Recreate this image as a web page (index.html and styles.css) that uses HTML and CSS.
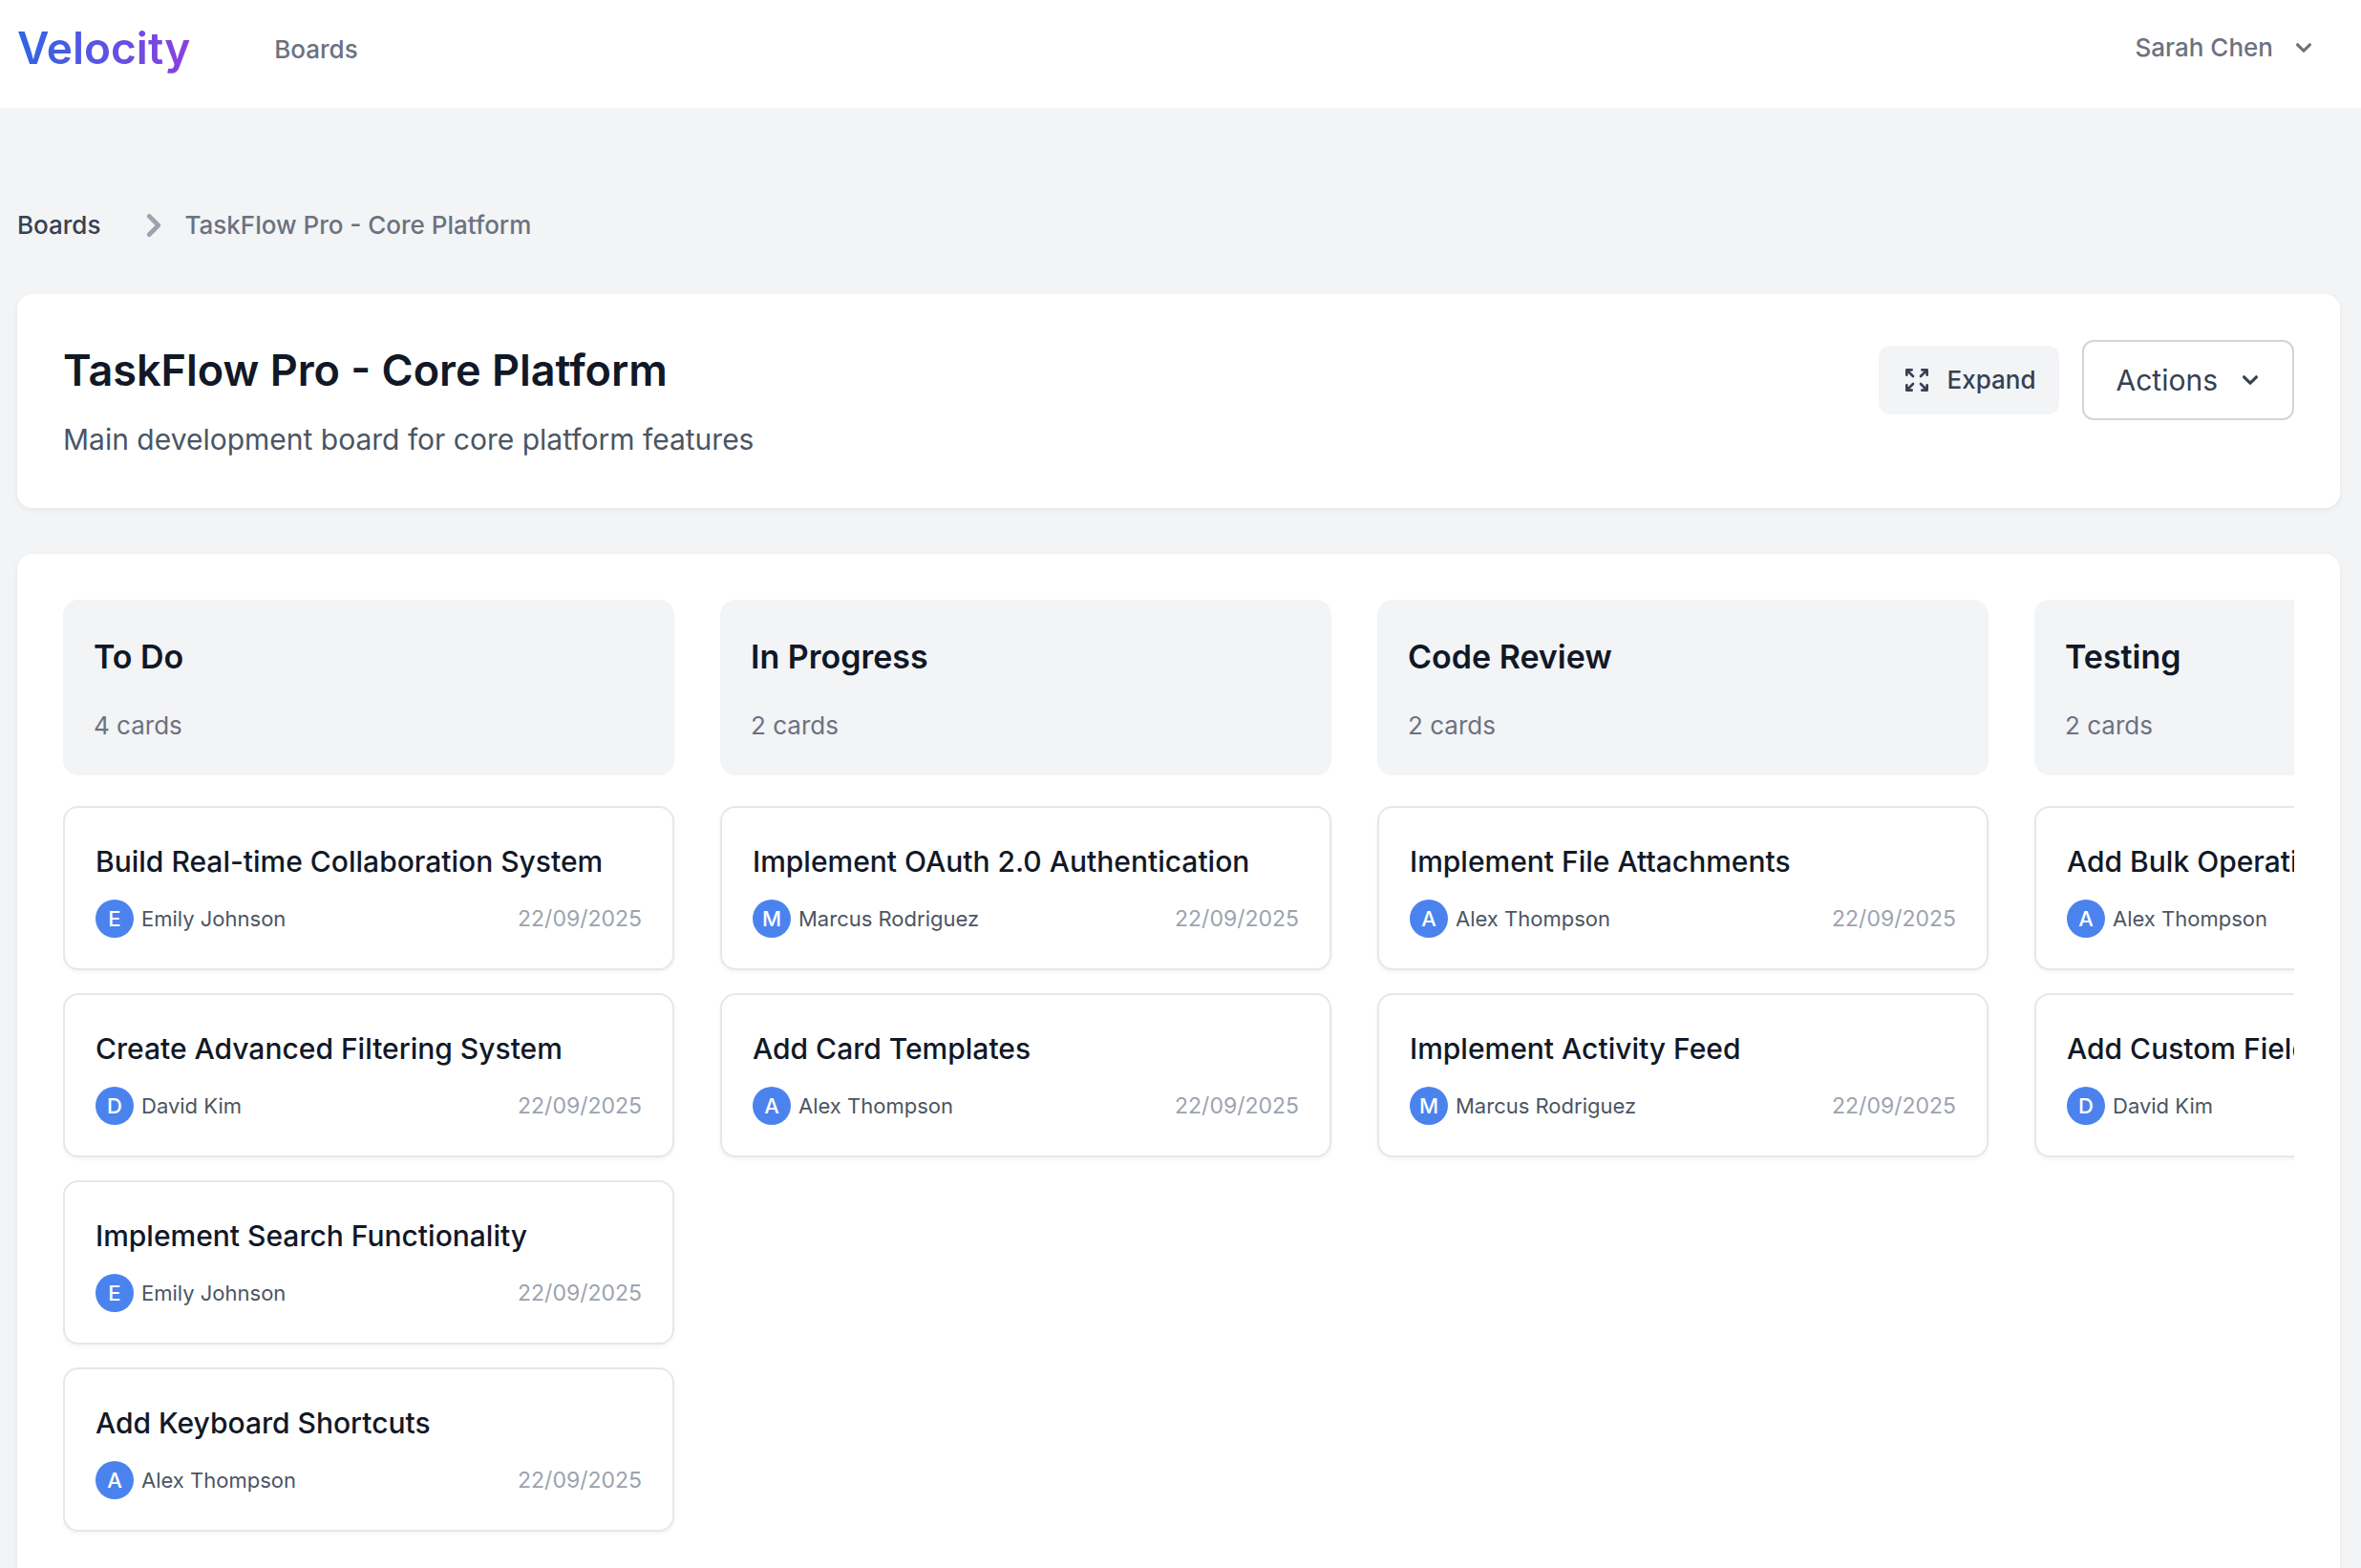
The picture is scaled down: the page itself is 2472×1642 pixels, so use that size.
FILE: index.html
```html
<!DOCTYPE html>
<html lang="en">
<head>
  <meta charset="utf-8">
  <meta name="viewport" content="width=device-width, initial-scale=1">
  <title>TaskFlow Pro - Core Platform | Velocity</title>
  <link rel="stylesheet" href="styles.css">
</head>
<body>
  <header class="topbar">
    <a class="brand" href="#">Velocity</a>
    <nav class="topnav">
      <a class="topnav-link" href="#">Boards</a>
    </nav>
    <button class="user-menu" type="button">
      Sarah Chen
      <svg class="icon" viewBox="0 0 20 20" fill="currentColor" aria-hidden="true"><path fill-rule="evenodd" d="M5.293 7.293a1 1 0 011.414 0L10 10.586l3.293-3.293a1 1 0 111.414 1.414l-4 4a1 1 0 01-1.414 0l-4-4a1 1 0 010-1.414z"/></svg>
    </button>
  </header>

  <main class="page">
    <nav class="breadcrumb" aria-label="Breadcrumb">
      <a class="breadcrumb-link" href="#">Boards</a>
      <svg class="breadcrumb-icon" viewBox="0 0 20 20" fill="currentColor" aria-hidden="true"><path fill-rule="evenodd" d="M7.293 14.707a1 1 0 010-1.414L10.586 10 7.293 6.707a1 1 0 011.414-1.414l4 4a1 1 0 010 1.414l-4 4a1 1 0 01-1.414 0z"/></svg>
      <span class="breadcrumb-current">TaskFlow Pro - Core Platform</span>
    </nav>

    <section class="panel board-header">
      <div class="board-intro">
        <h1 class="board-title">TaskFlow Pro - Core Platform</h1>
        <p class="board-description">Main development board for core platform features</p>
      </div>
      <div class="board-actions">
        <button class="button button-soft" type="button">
          <svg class="icon" viewBox="0 0 24 24" fill="none" stroke="currentColor" stroke-width="2" stroke-linecap="round" stroke-linejoin="round" aria-hidden="true"><path d="M4 8V4m0 0h4M4 4l5 5m11-1V4m0 0h-4m4 0l-5 5M4 16v4m0 0h4m-4 0l5-5m11 5l-5-5m5 5v-4m0 4h-4"/></svg>
          Expand
        </button>
        <button class="button button-outline" type="button">
          Actions
          <svg class="icon" viewBox="0 0 20 20" fill="currentColor" aria-hidden="true"><path fill-rule="evenodd" d="M5.293 7.293a1 1 0 011.414 0L10 10.586l3.293-3.293a1 1 0 111.414 1.414l-4 4a1 1 0 01-1.414 0l-4-4a1 1 0 010-1.414z"/></svg>
        </button>
      </div>
    </section>

    <section class="panel board">
      <div class="columns">
        <section class="column">
          <header class="column-header">
            <h2 class="column-title">To Do</h2>
            <p class="column-count">4 cards</p>
          </header>
          <article class="card">
            <h3 class="card-title">Build Real-time Collaboration System</h3>
            <div class="card-meta"><span class="avatar">E</span><span class="assignee">Emily Johnson</span><time class="date" datetime="2025-09-22">22/09/2025</time></div>
          </article>
          <article class="card">
            <h3 class="card-title">Create Advanced Filtering System</h3>
            <div class="card-meta"><span class="avatar">D</span><span class="assignee">David Kim</span><time class="date" datetime="2025-09-22">22/09/2025</time></div>
          </article>
          <article class="card">
            <h3 class="card-title">Implement Search Functionality</h3>
            <div class="card-meta"><span class="avatar">E</span><span class="assignee">Emily Johnson</span><time class="date" datetime="2025-09-22">22/09/2025</time></div>
          </article>
          <article class="card">
            <h3 class="card-title">Add Keyboard Shortcuts</h3>
            <div class="card-meta"><span class="avatar">A</span><span class="assignee">Alex Thompson</span><time class="date" datetime="2025-09-22">22/09/2025</time></div>
          </article>
        </section>

        <section class="column">
          <header class="column-header">
            <h2 class="column-title">In Progress</h2>
            <p class="column-count">2 cards</p>
          </header>
          <article class="card">
            <h3 class="card-title">Implement OAuth 2.0 Authentication</h3>
            <div class="card-meta"><span class="avatar">M</span><span class="assignee">Marcus Rodriguez</span><time class="date" datetime="2025-09-22">22/09/2025</time></div>
          </article>
          <article class="card">
            <h3 class="card-title">Add Card Templates</h3>
            <div class="card-meta"><span class="avatar">A</span><span class="assignee">Alex Thompson</span><time class="date" datetime="2025-09-22">22/09/2025</time></div>
          </article>
        </section>

        <section class="column">
          <header class="column-header">
            <h2 class="column-title">Code Review</h2>
            <p class="column-count">2 cards</p>
          </header>
          <article class="card">
            <h3 class="card-title">Implement File Attachments</h3>
            <div class="card-meta"><span class="avatar">A</span><span class="assignee">Alex Thompson</span><time class="date" datetime="2025-09-22">22/09/2025</time></div>
          </article>
          <article class="card">
            <h3 class="card-title">Implement Activity Feed</h3>
            <div class="card-meta"><span class="avatar">M</span><span class="assignee">Marcus Rodriguez</span><time class="date" datetime="2025-09-22">22/09/2025</time></div>
          </article>
        </section>

        <section class="column">
          <header class="column-header">
            <h2 class="column-title">Testing</h2>
            <p class="column-count">2 cards</p>
          </header>
          <article class="card">
            <h3 class="card-title">Add Bulk Operations</h3>
            <div class="card-meta"><span class="avatar">A</span><span class="assignee">Alex Thompson</span><time class="date" datetime="2025-09-22">22/09/2025</time></div>
          </article>
          <article class="card">
            <h3 class="card-title">Add Custom Fields</h3>
            <div class="card-meta"><span class="avatar">D</span><span class="assignee">David Kim</span><time class="date" datetime="2025-09-22">22/09/2025</time></div>
          </article>
        </section>
      </div>
    </section>
  </main>
</body>
</html>
```
FILE: styles.css
```css
* {
  box-sizing: border-box;
}

body {
  margin: 0;
  min-height: 100vh;
  display: flex;
  flex-direction: column;
  background: #f3f4f6;
  color: #111827;
  font: 400 30px/48px Inter, "Liberation Sans", sans-serif;
}

h1, h2, h3, p {
  margin: 0;
}

a {
  color: inherit;
  text-decoration: none;
}

button {
  margin: 0;
  border: 0;
  background: none;
  font: inherit;
  cursor: pointer;
}

.icon {
  flex: none;
  width: 32px;
  height: 32px;
}

/* Top bar */
.topbar {
  display: flex;
  align-items: center;
  padding: 10px 44px 23px 18px;
  background: #fff;
  border-bottom: 1px solid #f3f4f6;
}

.brand {
  font-size: 46px;
  font-weight: 600;
  line-height: 80px;
  background: linear-gradient(to right, #2f66e4, #8b40df);
  background-clip: text;
  -webkit-background-clip: text;
  color: transparent;
}

.topnav {
  flex: 1;
  padding-left: 88px;
}

.topnav-link,
.user-menu {
  color: #6b7280;
  font-size: 26px;
  font-weight: 500;
  line-height: 40px;
}

.user-menu {
  display: flex;
  align-items: center;
  gap: 16px;
  padding: 0;
}

/* Page */
.page {
  flex: 1;
  display: flex;
  flex-direction: column;
  padding: 92px 22px 0 18px;
}

.breadcrumb {
  display: flex;
  align-items: center;
  margin-bottom: 42px;
  color: #6b7280;
  font-size: 26px;
  font-weight: 500;
  line-height: 60px;
}

.breadcrumb-link {
  color: #374151;
}

.breadcrumb-icon {
  width: 48px;
  height: 48px;
  margin: 0 8px 0 32px;
  color: #9ca3af;
}

.panel {
  padding: 48px;
  border-radius: 16px;
  background: #fff;
  box-shadow: 0 2px 6px rgba(0, 0, 0, 0.06);
}

.board-header {
  display: flex;
  justify-content: space-between;
  align-items: flex-start;
  margin-bottom: 48px;
}

.board-title {
  margin-bottom: 16px;
  font-size: 45px;
  font-weight: 600;
  line-height: 64px;
}

.board-description {
  color: #4b5563;
}

.board-actions {
  display: flex;
  align-items: center;
  gap: 24px;
}

.button {
  display: flex;
  align-items: center;
  gap: 16px;
  border-radius: 12px;
  color: #374151;
}

.button-soft {
  padding: 16px 24px;
  background: #f3f4f6;
  font-size: 26px;
  font-weight: 500;
  line-height: 40px;
}

.button-outline {
  gap: 18px;
  padding: 16px 28px 16px 34px;
  border: 2px solid #d1d5db;
}

/* Board */
.board {
  flex: 1;
  border-bottom-left-radius: 0;
  border-bottom-right-radius: 0;
}

.columns {
  display: flex;
  gap: 48px;
  overflow-x: auto;
  padding-bottom: 36px;
  scrollbar-width: none;
}

.column {
  flex: none;
  width: 640px;
  display: flex;
  flex-direction: column;
  gap: 24px;
}

.column-header {
  margin-bottom: 8px;
  padding: 32px;
  border-radius: 16px;
  background: #f3f4f6;
}

.column-title {
  margin-bottom: 24px;
  font-size: 34px;
  font-weight: 600;
  line-height: 56px;
}

.column-count {
  color: #6b7280;
  font-size: 26px;
  line-height: 40px;
}

.card {
  padding: 32px;
  border: 2px solid #e5e7eb;
  border-radius: 16px;
  background: #fff;
  box-shadow: 0 2px 4px rgba(0, 0, 0, 0.05);
}

.card-title {
  margin-bottom: 16px;
  font-size: 30px;
  font-weight: 500;
  line-height: 48px;
  white-space: nowrap;
}

.card-meta {
  display: flex;
  align-items: center;
  gap: 8px;
  font-size: 22px;
  line-height: 40px;
}

.avatar {
  width: 40px;
  border-radius: 50%;
  background: #4b83ee;
  color: #fff;
  font-weight: 500;
  text-align: center;
}

.assignee {
  flex: 1;
  color: #4b5563;
}

.date {
  color: #9ca3af;
  font-size: 23px;
}
```
